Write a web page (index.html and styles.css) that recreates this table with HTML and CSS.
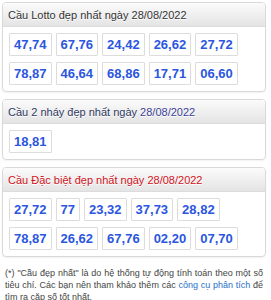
FILE: index.html
```html
<!DOCTYPE html>
<html lang="vi">
<head>
<meta charset="utf-8">
<link rel="stylesheet" href="styles.css">
</head>
<body>
<div class="page">
  <section class="panel">
    <h2 class="panel-title">Cầu Lotto đẹp nhất ngày 28/08/2022</h2>
    <div class="nums">
      <span class="num">47,74</span><span class="num">67,76</span><span class="num">24,42</span><span class="num">26,62</span><span class="num">27,72</span>
      <span class="num">78,87</span><span class="num">46,64</span><span class="num">68,86</span><span class="num">17,71</span><span class="num">06,60</span>
    </div>
  </section>
  <section class="panel">
    <h2 class="panel-title title-blue">Cầu 2 nháy đẹp nhất ngày <span class="date">28/08/2022</span></h2>
    <div class="nums">
      <span class="num">18,81</span>
    </div>
  </section>
  <section class="panel">
    <h2 class="panel-title title-red">Cầu Đặc biệt đẹp nhất ngày 28/08/2022</h2>
    <div class="nums">
      <span class="num">27,72</span><span class="num">77</span><span class="num">23,32</span><span class="num">37,73</span><span class="num">28,82</span>
      <span class="num">78,87</span><span class="num">26,62</span><span class="num">67,76</span><span class="num">02,20</span><span class="num">07,70</span>
    </div>
  </section>
  <p class="note">(*) "Cầu đẹp nhất" là do hệ thống tự động tính toán theo một số tiêu chí. Các bạn nên tham khảo thêm các <a href="#" class="link">công cụ phân tích</a> để tìm ra cặp số tốt nhất.</p>
</div>
</body>
</html>
```
FILE: styles.css
```css
html, body {
  margin: 0;
  padding: 0;
  background: #fff;
}
body {
  font-family: "Liberation Sans", Arial, sans-serif;
}
.page {
  padding: 2px 5px 0 2px;
  display: flex;
  flex-direction: column;
  gap: 7px;
}
.panel {
  border: 1px solid #d9d9d9;
  border-radius: 4px;
  box-shadow: 0 1px 2px rgba(0,0,0,0.06);
  overflow: hidden;
}
.panel-title {
  margin: 0;
  height: 23px;
  line-height: 24px;
  padding: 0 5px;
  font-size: 11px;
  font-weight: normal;
  color: #333;
  background: linear-gradient(#fbfbfb, #e4e4e4);
  border-bottom: 1px solid #dcdcdc;
  text-shadow: 0 1px 0 #fff;
  white-space: nowrap;
}
.title-blue {
  color: #2f3a62;
}
.title-blue .date {
  color: #3b3f96;
}
.title-red {
  color: #d0121b;
}
.nums {
  display: flex;
  flex-wrap: wrap;
  gap: 6px 4px;
  padding: 6px 6px 6px;
}
.num {
  display: inline-block;
  height: 21px;
  line-height: 21px;
  padding: 0 4px;
  border: 1px solid #dcdcdc;
  border-radius: 1px;
  font-size: 13px;
  font-weight: bold;
  color: #2b56e0;
  background: #fff;
}
.note {
  margin: 3px 3px 0 3px;
  font-size: 9px;
  line-height: 12px;
  color: #444;
  text-align: justify;
}
.link {
  color: #2b6fc8;
  text-decoration: none;
}
```
